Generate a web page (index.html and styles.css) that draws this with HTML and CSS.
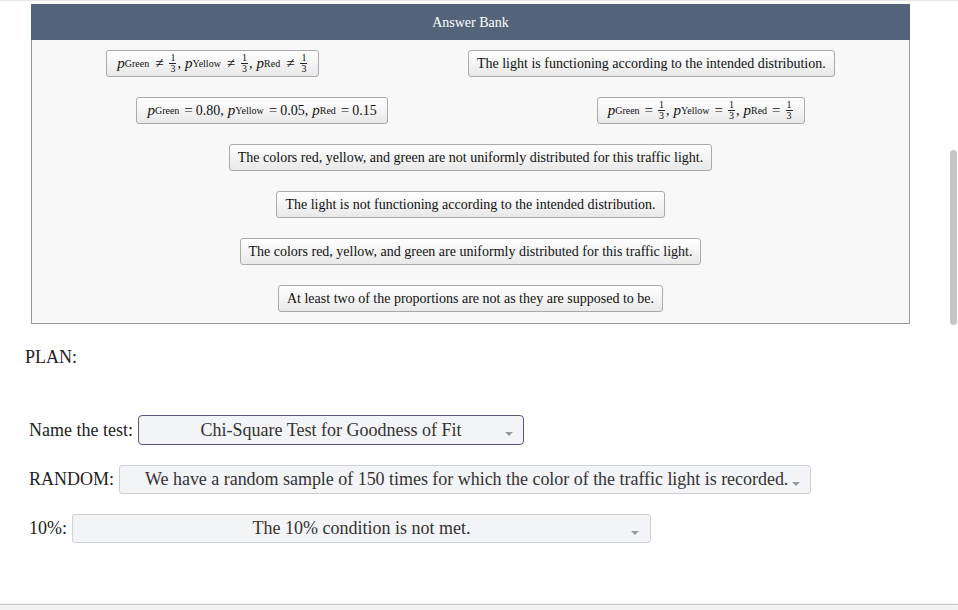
FILE: index.html
```html
<!DOCTYPE html>
<html lang="en">
<head>
    <meta charset="UTF-8">
    <title>Chi-Square Plan</title>
    <link rel="stylesheet" href="styles.css">
</head>
<body>
    <div class="page">
        <div class="top-rule"></div>

        <div class="answer-bank">
            <div class="bank-header">Answer Bank</div>
            <div class="bank-items">
                <div class="bank-row">
                    <div class="chip chip-math">
                        <span class="m-p">p</span><sub>Green</sub><span class="op">≠</span><span class="frac"><span>1</span><span>3</span></span><span class="comma">,</span>
                        <span class="m-p">p</span><sub>Yellow</sub><span class="op">≠</span><span class="frac"><span>1</span><span>3</span></span><span class="comma">,</span>
                        <span class="m-p">p</span><sub>Red</sub><span class="op">≠</span><span class="frac"><span>1</span><span>3</span></span>
                    </div>
                    <div class="chip">The light is functioning according to the intended distribution.</div>
                </div>

                <div class="bank-row">
                    <div class="chip chip-math">
                        <span class="m-p">p</span><sub>Green</sub><span class="op eq">=</span><span class="num">0.80,</span>
                        <span class="m-p">p</span><sub>Yellow</sub><span class="op eq">=</span><span class="num">0.05,</span>
                        <span class="m-p">p</span><sub>Red</sub><span class="op eq">=</span><span class="num">0.15</span>
                    </div>
                    <div class="chip chip-math">
                        <span class="m-p">p</span><sub>Green</sub><span class="op tight">=</span><span class="frac"><span>1</span><span>3</span></span><span class="comma">,</span>
                        <span class="m-p">p</span><sub>Yellow</sub><span class="op tight">=</span><span class="frac"><span>1</span><span>3</span></span><span class="comma">,</span>
                        <span class="m-p">p</span><sub>Red</sub><span class="op tight">=</span><span class="frac"><span>1</span><span>3</span></span>
                    </div>
                </div>

                <div class="bank-row">
                    <div class="chip">The colors red, yellow, and green are not uniformly distributed for this traffic light.</div>
                </div>
                <div class="bank-row">
                    <div class="chip">The light is not functioning according to the intended distribution.</div>
                </div>
                <div class="bank-row">
                    <div class="chip">The colors red, yellow, and green are uniformly distributed for this traffic light.</div>
                </div>
                <div class="bank-row">
                    <div class="chip">At least two of the proportions are not as they are supposed to be.</div>
                </div>
            </div>
        </div>

        <div class="plan">
            <p class="plan-title">PLAN:</p>

            <div class="fields">
                <div class="field">
                    <span class="field-label">Name the test:</span>
                    <div class="select select-focus select-test">
                        <span class="select-text">Chi-Square Test for Goodness of Fit</span>
                        <span class="caret"></span>
                    </div>
                </div>

                <div class="field">
                    <span class="field-label">RANDOM:</span>
                    <div class="select select-random">
                        <span class="select-text">We have a random sample of 150 times for which the color of the traffic light is recorded.</span>
                        <span class="caret"></span>
                    </div>
                </div>

                <div class="field">
                    <span class="field-label">10%:</span>
                    <div class="select select-ten">
                        <span class="select-text">The 10% condition is not met.</span>
                        <span class="caret"></span>
                    </div>
                </div>
            </div>
        </div>

        <div class="bottom-bar"></div>
    </div>

    <div class="scroll-thumb"></div>
</body>
</html>
```

FILE: styles.css
```css
* {
    margin: 0;
    padding: 0;
    box-sizing: border-box;
}

body {
    font-family: 'Liberation Serif', 'Times New Roman', serif;
    background: #fff;
    color: #222;
    overflow: hidden;
}

.page {
    height: 100vh;
    display: flex;
    flex-direction: column;
}

.top-rule {
    height: 1px;
    background: #e6e6e6;
    margin-bottom: 3px;
}

/* Answer bank */
.answer-bank {
    margin-left: 31px;
    width: 879px;
    border: 1px solid #999;
    border-top: none;
    background: #f8f8f8;
}

.bank-header {
    height: 36px;
    padding-top: 1px;
    background: #52637a;
    color: #fff;
    font-size: 14px;
    text-align: center;
    line-height: 35px;
    margin: 0 -1px;
}

.bank-items {
    display: flex;
    flex-direction: column;
    gap: 20px;
    padding: 10px 0 11px;
}

.bank-row {
    display: flex;
    justify-content: space-around;
}

.chip {
    height: 27px;
    padding: 0 8px;
    border: 1px solid #aaa;
    border-radius: 3px;
    background: linear-gradient(to bottom, #fff 0%, #f4f4f4 50%, #e8e8e8 100%);
    font-size: 14px;
    white-space: nowrap;
    display: flex;
    align-items: center;
    color: #111;
}

.chip-math {
    padding: 0 10px;
}

.m-p {
    font-style: italic;
    font-size: 15px;
}

.chip sub {
    font-size: 10px;
    vertical-align: -3px;
    line-height: 1;
    margin-right: 1px;
}

.op {
    margin: 0 5px;
    font-size: 15px;
}

.op.eq {
    margin: 0 3px 0 4px;
}

.op.tight {
    margin: 0 4px;
}

.num {
    margin-right: 4px;
}

.num:last-child {
    margin-right: 0;
}

.frac {
    display: inline-flex;
    flex-direction: column;
    align-items: center;
    font-size: 10px;
    line-height: 10px;
    margin: 0 1px;
}

.frac span:first-child {
    border-bottom: 1px solid #222;
    padding: 0 1px;
}

.comma {
    margin-right: 4px;
}

/* Plan fields */
.plan {
    padding-left: 25px;
}

.plan-title {
    font-size: 18px;
    line-height: 20px;
    margin-top: 23px;
}

.fields {
    display: flex;
    flex-direction: column;
    gap: 20px;
    margin-top: 48px;
    padding-left: 4px;
}

.field {
    display: flex;
    align-items: center;
    font-size: 18px;
}

.field-label {
    margin-right: 5px;
}

.select {
    position: relative;
    height: 29px;
    border: 1px solid #cfcfd4;
    border-radius: 3px;
    background: #f3f4f7;
    color: #333;
    display: flex;
    align-items: center;
    justify-content: center;
    padding: 0 22px;
    white-space: nowrap;
}

.select-focus {
    height: 30px;
    border-color: #5b5580;
    border-radius: 4px;
}

.select-test {
    width: 386px;
}

.select-random {
    width: 692px;
    justify-content: flex-start;
    padding-left: 25px;
    letter-spacing: -0.03px;
}

.select-ten {
    width: 579px;
}

.caret {
    position: absolute;
    right: 10px;
    top: 16px;
    border-left: 4px solid transparent;
    border-right: 4px solid transparent;
    border-top: 4px solid #999;
}

.select-ten .caret {
    right: 11px;
}

.bottom-bar {
    margin-top: auto;
    height: 6px;
    border-top: 1px solid #c8c8c8;
    background: #f2f2f2;
    box-shadow: 0 -1px 2px rgba(0, 0, 0, 0.08);
}

.scroll-thumb {
    position: absolute;
    right: 1px;
    top: 150px;
    width: 7px;
    height: 175px;
    border-radius: 4px;
    background: #c6c6c6;
}
```
